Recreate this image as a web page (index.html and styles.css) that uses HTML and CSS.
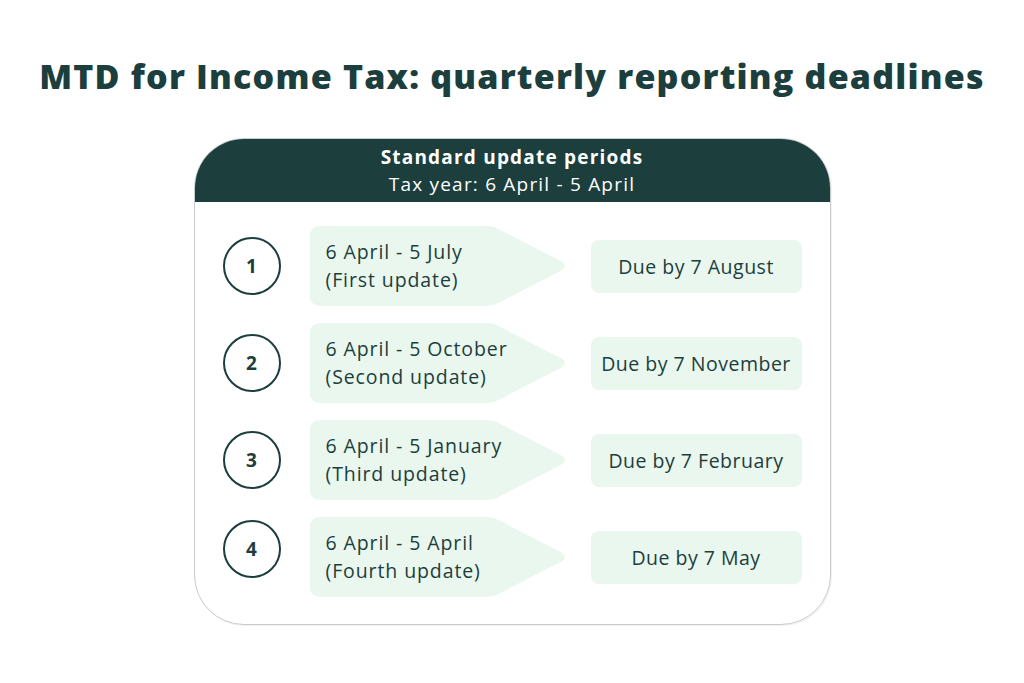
FILE: index.html
```html
<!DOCTYPE html>
<html lang="en">
<head>
<meta charset="utf-8">
<title>MTD for Income Tax: quarterly reporting deadlines</title>
<link rel="stylesheet" href="styles.css">
</head>
<body>
<main class="page">
  <h1 class="title">MTD for Income Tax: quarterly reporting deadlines</h1>
  <section class="card">
    <header class="card-head">
      <div class="card-head-title">Standard update periods</div>
      <div class="card-head-sub">Tax year: 6 April - 5 April</div>
    </header>
    <div class="rows">
      <div class="row">
        <div class="circle">1</div>
        <div class="period"><span>6 April - 5 July<br>(First update)</span></div>
        <div class="due">Due by 7 August</div>
      </div>
      <div class="row">
        <div class="circle">2</div>
        <div class="period"><span>6 April - 5 October<br>(Second update)</span></div>
        <div class="due">Due by 7 November</div>
      </div>
      <div class="row">
        <div class="circle">3</div>
        <div class="period"><span>6 April - 5 January<br>(Third update)</span></div>
        <div class="due">Due by 7 February</div>
      </div>
      <div class="row">
        <div class="circle circle--up">4</div>
        <div class="period"><span>6 April - 5 April<br>(Fourth update)</span></div>
        <div class="due">Due by 7 May</div>
      </div>
    </div>
  </section>
</main>
</body>
</html>
```
FILE: styles.css
```css
* { box-sizing: border-box; }
html, body { margin: 0; padding: 0; background: #ffffff; }
body {
  font-family: "Open Sans", "Noto Sans", sans-serif;
  color: #1c3e3d;
  width: 1024px;
  height: 683px;
  overflow: hidden;
}
.page {
  display: flex;
  flex-direction: column;
  align-items: center;
  padding-top: 53px;
}
.title {
  margin: 0;
  font-size: 34px;
  font-weight: 800;
  line-height: 46px;
  letter-spacing: 1.2px;
  color: #1c3e3d;
}
.card {
  margin-top: 39px;
  width: 637px;
  border: 1px solid #c5cccb;
  border-radius: 50px;
  overflow: hidden;
  box-shadow: 1px 1px 1px rgba(0,0,0,0.06);
}
.card-head {
  background: #1c3e3d;
  color: #ffffff;
  height: 63px;
  display: flex;
  flex-direction: column;
  align-items: center;
  justify-content: center;
  font-size: 19px;
  line-height: 27px;
  letter-spacing: 1.2px;
  padding-top: 1px;
}
.card-head-title { font-weight: 700; }
.card-head-sub { font-weight: 400; }
.rows {
  display: flex;
  flex-direction: column;
  gap: 17px;
  padding: 24px 28px 27px 28px;
}
.row {
  display: flex;
  align-items: center;
  height: 80px;
}
.circle {
  width: 58px;
  height: 58px;
  border: 2px solid #1c3e3d;
  border-radius: 50%;
  display: flex;
  align-items: center;
  justify-content: center;
  font-weight: 700;
  font-size: 19px;
  flex: none;
}
.circle--up { margin-bottom: 16px; }
.period {
  margin-left: 29px;
  width: 258px;
  height: 80px;
  background: #eaf7ee;
  clip-path: path('M12 0 H178 Q184 0 189 3 L253 36 Q258 40 253 44 L189 77 Q184 80 178 80 H12 Q0 80 0 68 V12 Q0 0 12 0 Z');
  display: flex;
  align-items: center;
  padding-left: 16px;
  font-size: 19.5px;
  line-height: 28px;
  letter-spacing: 0.9px;
  flex: none;
}
.due {
  margin-left: 23px;
  width: 211px;
  height: 53px;
  background: #eaf7ee;
  border-radius: 8px;
  display: flex;
  align-items: center;
  justify-content: center;
  font-size: 19.5px;
  letter-spacing: 0.5px;
  flex: none;
}
```
